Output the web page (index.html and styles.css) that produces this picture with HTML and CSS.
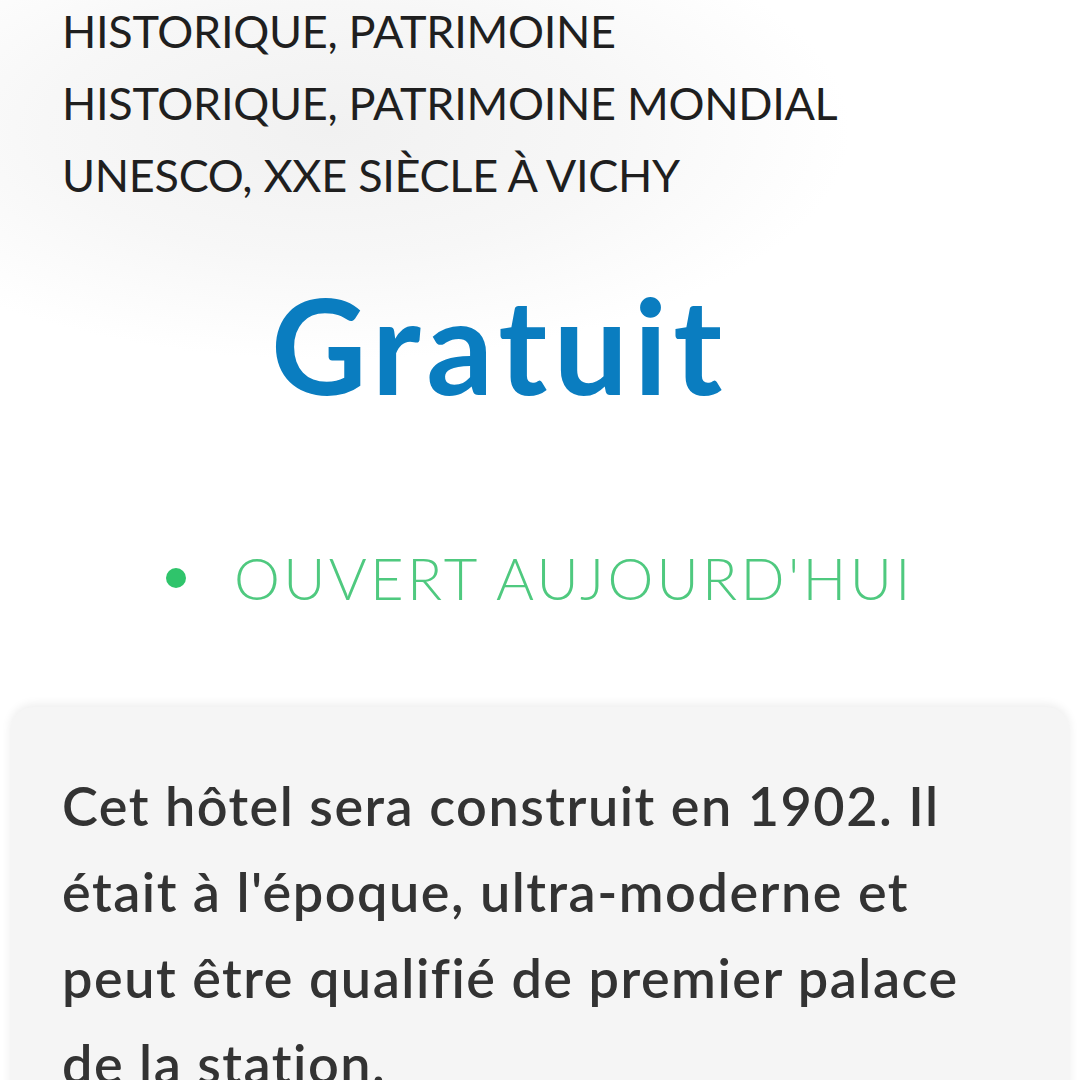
FILE: index.html
```html
<!DOCTYPE html>
<html lang="fr">
<head>
<meta charset="utf-8">
<title>Gratuit</title>
<link rel="stylesheet" href="styles.css">
</head>
<body>
<div class="page">
  <header class="head">
    <p class="cats">HISTORIQUE, PATRIMOINE<br>HISTORIQUE, PATRIMOINE MONDIAL<br>UNESCO, XXE SIÈCLE À VICHY</p>
  </header>
  <div class="price">Gratuit</div>
  <div class="status">
    <span class="dot"></span>
    <span class="status-text">OUVERT AUJOURD'HUI</span>
  </div>
  <section class="card">
    <p class="desc">Cet hôtel sera construit en 1902. Il était à l'époque, ultra-moderne et peut être qualifié de premier palace de la station.</p>
  </section>
</div>
</body>
</html>
```
FILE: styles.css
```css
html, body {
  margin: 0;
  padding: 0;
  background: #ffffff;
}
body {
  font-family: Lato, "Liberation Sans", sans-serif;
  width: 1080px;
  height: 1080px;
  overflow: hidden;
}
.page {
  display: flex;
  flex-direction: column;
  min-height: 1080px;
  background: radial-gradient(ellipse 520px 230px at 330px 130px, #f1f1f1 0%, #f7f7f7 55%, #ffffff 100%);
}
.head {
  padding-left: 62px;
}
.cats {
  margin: -5px 0 0 0;
  font-size: 45px;
  line-height: 72px;
  font-weight: 400;
  letter-spacing: -0.3px;
  color: #1f1f1f;
}
.price {
  margin-top: 67px;
  padding-left: 271px;
  font-size: 132px;
  line-height: 132px;
  font-weight: 700;
  letter-spacing: 6px;
  color: #0a7dc0;
}
.status {
  margin-top: 133px;
  display: flex;
  align-items: center;
  padding-left: 166px;
  gap: 48px;
  height: 70px;
}
.dot {
  width: 20px;
  height: 20px;
  border-radius: 50%;
  background: #2fc46b;
  flex: none;
}
.status-text {
  font-size: 58px;
  line-height: 70px;
  font-weight: 300;
  letter-spacing: 3.3px;
  color: #4fc97f;
}
.card {
  flex: 1;
  margin: 94px 10px 0 10px;
  background: #f5f5f5;
  border-radius: 24px 24px 0 0;
  box-shadow: 0 -3px 10px rgba(0, 0, 0, 0.07);
  padding: 56px 60px 40px 52px;
}
.desc {
  margin: 0;
  font-size: 54px;
  line-height: 86px;
  font-weight: 600;
  letter-spacing: 1.5px;
  color: #333333;
}
```
